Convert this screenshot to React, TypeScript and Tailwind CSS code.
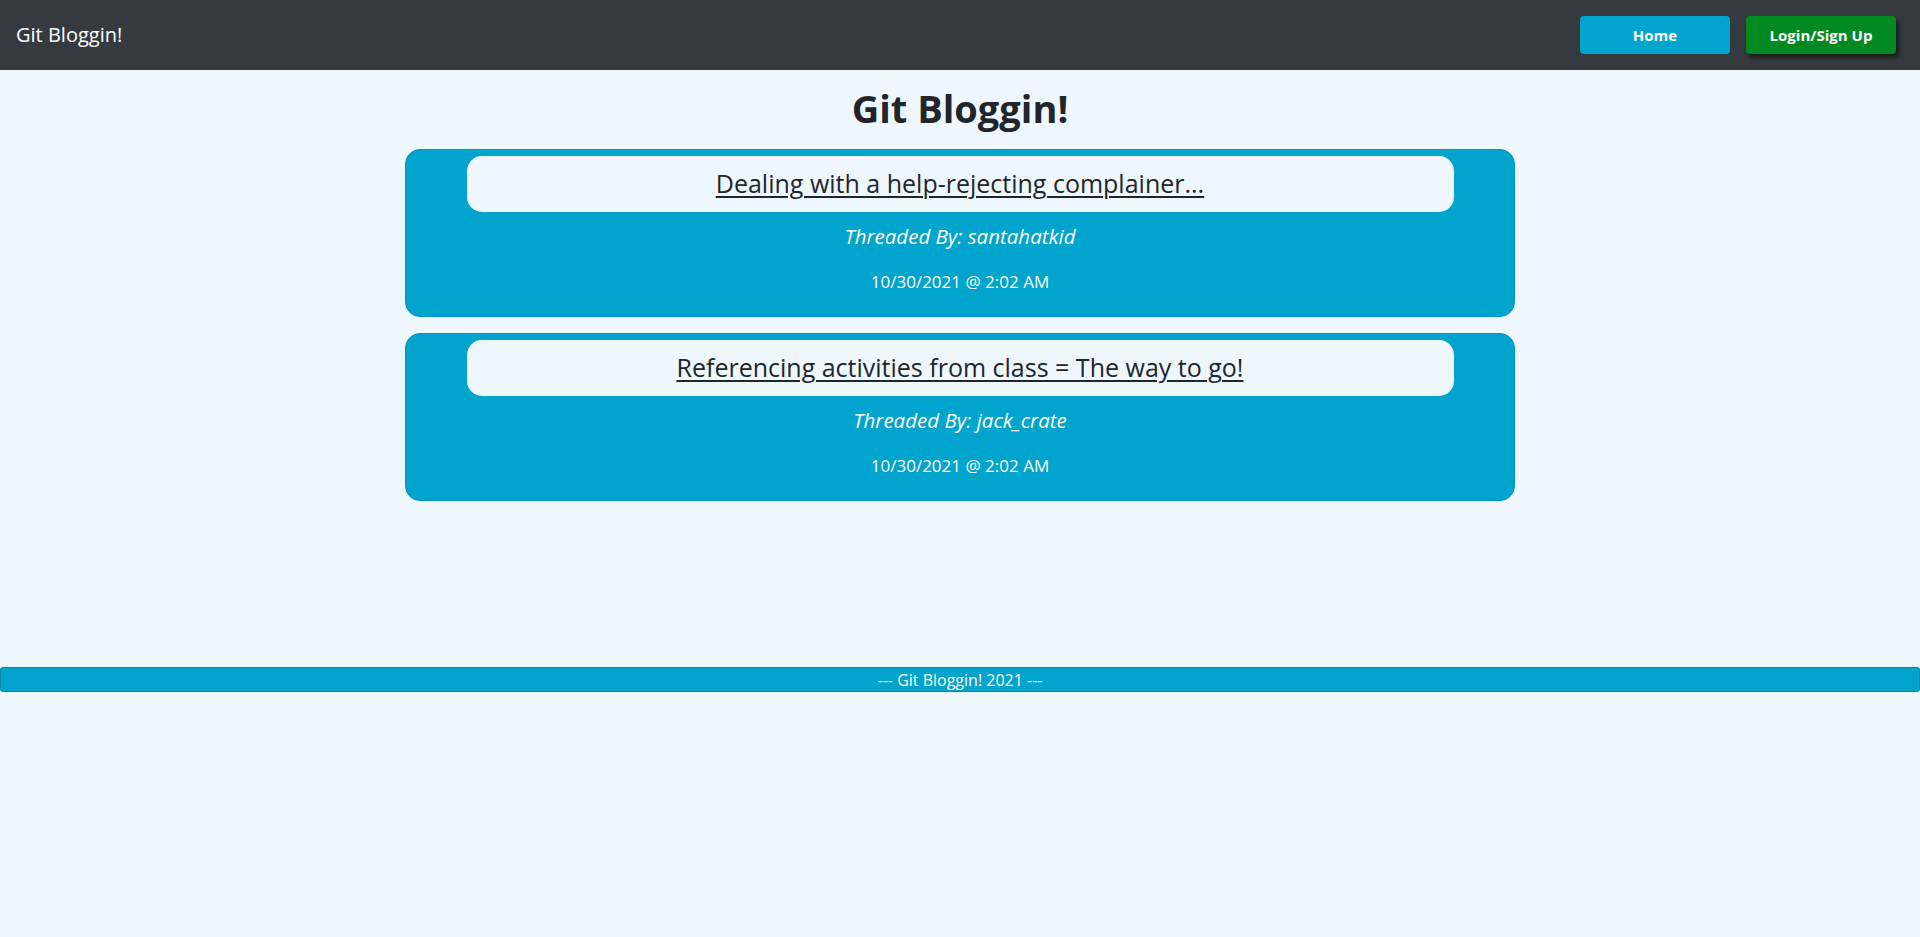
const posts = [
  {
    title: "Dealing with a help-rejecting complainer...",
    author: "santahatkid",
    date: "10/30/2021 @ 2:02 AM",
  },
  {
    title: "Referencing activities from class = The way to go!",
    author: "jack_crate",
    date: "10/30/2021 @ 2:02 AM",
  },
];

const App = () => {
  return (
    <div className="min-h-screen bg-[#eff7fe] text-[#212529] font-['Open_Sans','Noto_Sans',sans-serif]">
      <nav className="h-[70px] bg-[#343a40] flex items-center justify-between pl-4 pr-6">
        <span className="text-white text-[20px] leading-none">Git Bloggin!</span>
        <div className="flex items-center gap-4">
          <button className="w-[150px] h-[38px] rounded-[4px] bg-[#00a4cc] text-white text-[15px] font-bold">
            Home
          </button>
          <button className="w-[150px] h-[38px] rounded-[4px] bg-[#018a22] text-white text-[15px] font-bold shadow-[3px_4px_5px_rgba(0,0,0,0.55)]">
            Login/Sign Up
          </button>
        </div>
      </nav>

      <main className="w-[1110px] mx-auto">
        <h1 className="text-center text-[38px] font-bold leading-[48px] mt-[14px] mb-[17px]">
          Git Bloggin!
        </h1>

        <div className="flex flex-col gap-4">
          {posts.map((post) => (
            <div
              key={post.title}
              className="h-[168px] rounded-[15px] border border-[#0096bb] bg-[#00a4cc] flex flex-col items-center pt-[6px]"
            >
              <div className="w-[987px] h-[56px] rounded-[15px] bg-[#eff7fe] flex items-center justify-center">
                <a className="text-[25px] font-medium underline underline-offset-[3px] decoration-[2px] text-[#1c262c] cursor-pointer">
                  {post.title}
                </a>
              </div>
              <p className="mt-[12px] text-white italic text-[20.5px] leading-[24px]">
                Threaded By: {post.author}
              </p>
              <p className="mt-[24px] text-white text-[17px] leading-[20px]">{post.date}</p>
            </div>
          ))}
        </div>
      </main>

      <footer className="mt-[166px] h-[25px] rounded-[3px] border border-[#0089ab] bg-[#00a4cc] text-white text-[16px] flex items-center justify-center">
        --- Git Bloggin! 2021 ---
      </footer>
    </div>
  );
};

export default App;
